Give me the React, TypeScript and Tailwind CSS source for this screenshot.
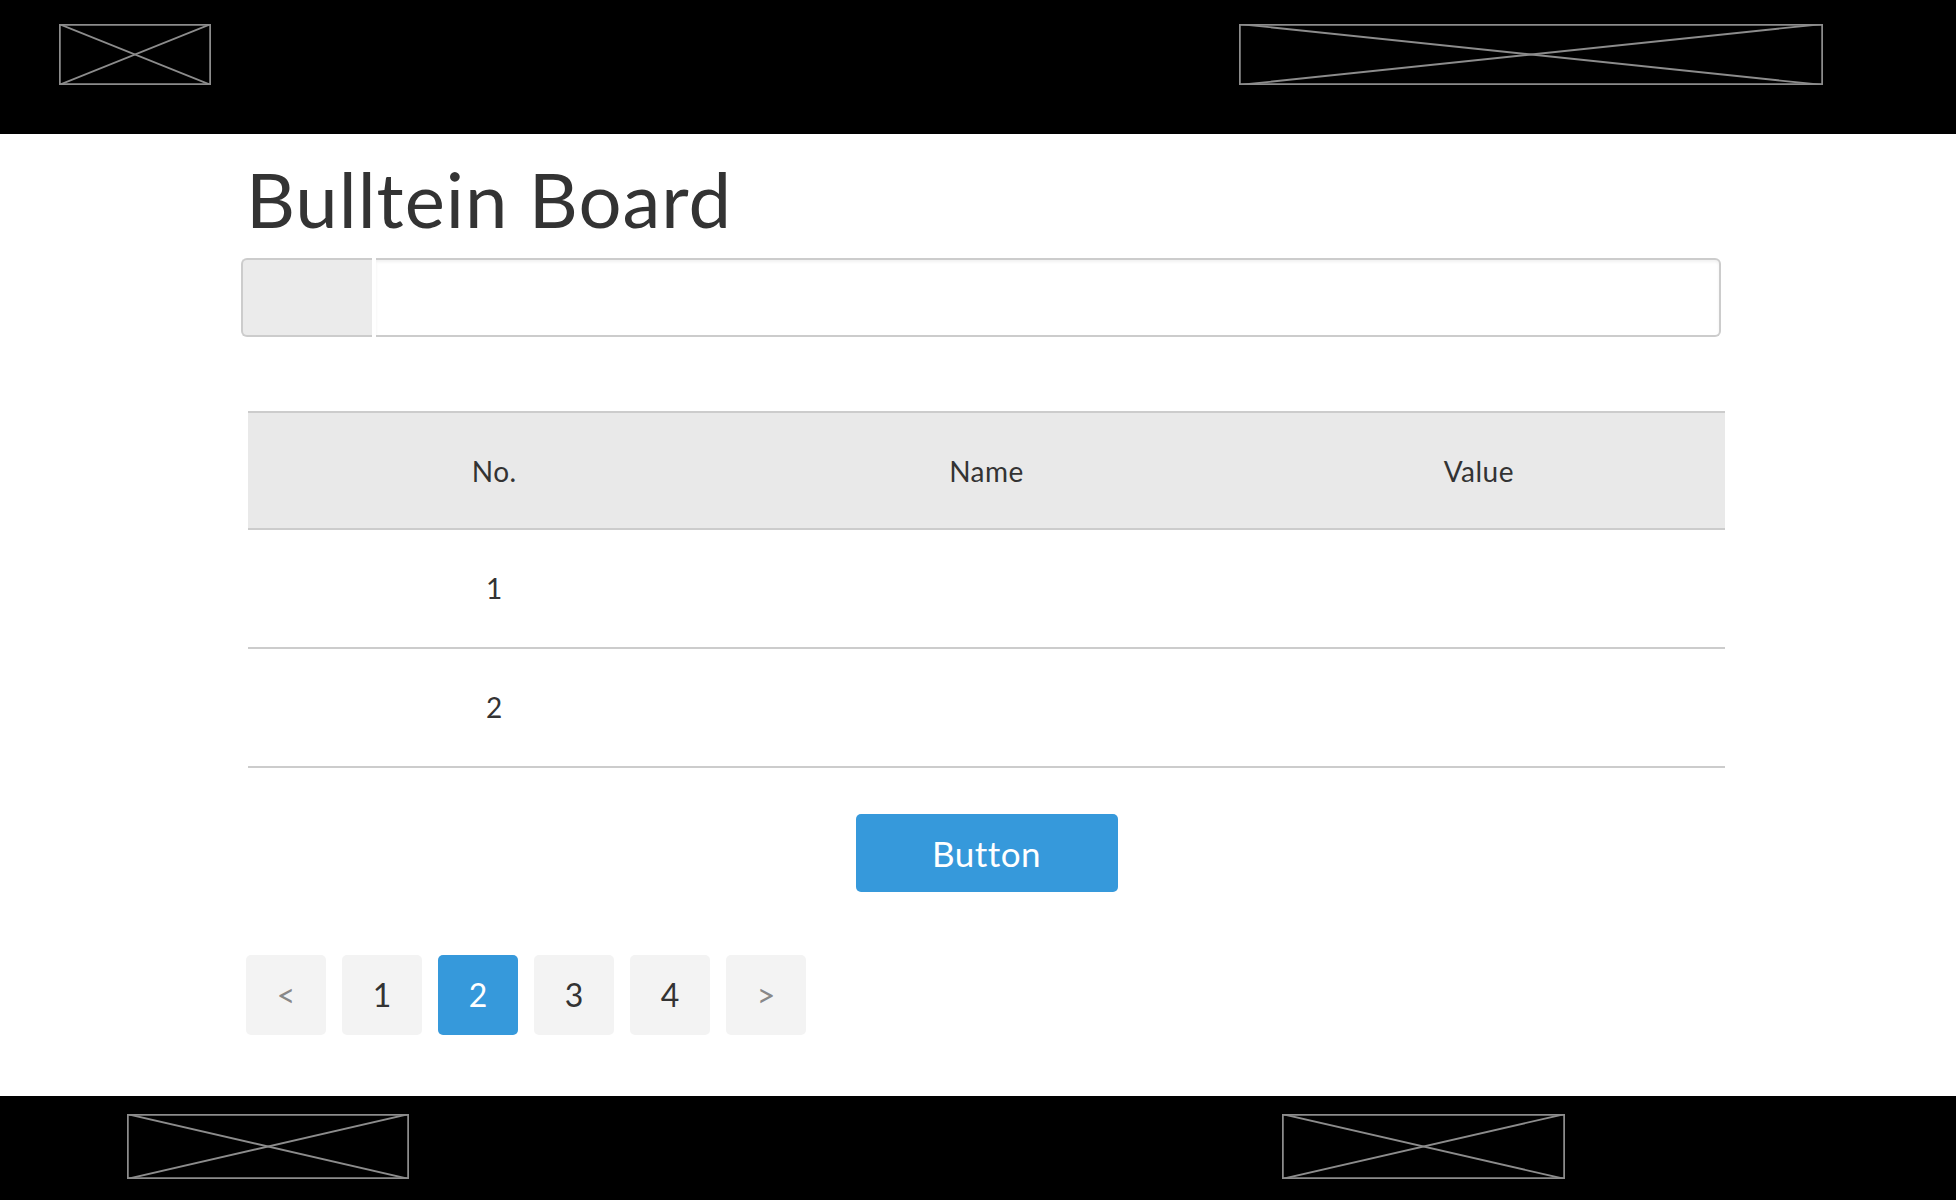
import React from 'react';

function Placeholder({ className }: { className: string }) {
  return (
    <svg className={className} viewBox="0 0 100 100" preserveAspectRatio="none">
      <rect x="0" y="0" width="100" height="100" fill="none" stroke="#8c8c8c" strokeWidth="3.5" vectorEffect="non-scaling-stroke" />
      <line x1="0" y1="0" x2="100" y2="100" stroke="#8c8c8c" strokeWidth="1.8" vectorEffect="non-scaling-stroke" />
      <line x1="100" y1="0" x2="0" y2="100" stroke="#8c8c8c" strokeWidth="1.8" vectorEffect="non-scaling-stroke" />
    </svg>
  );
}

const rows = [1, 2];
const pages = ['<', '1', '2', '3', '4', '>'];

export default function App() {
  return (
    <div className="min-h-screen flex flex-col bg-white text-[#333]" style={{ fontFamily: 'Lato, "Noto Sans", sans-serif' }}>
      {/* Header */}
      <header className="h-[134px] bg-black flex items-start justify-between pt-[24px] pl-[59px] pr-[133px] shrink-0">
        <Placeholder className="w-[152px] h-[61px]" />
        <Placeholder className="w-[584px] h-[61px]" />
      </header>

      {/* Main */}
      <main className="h-[962px] pl-[241px] flex flex-col">
        <h1 className="text-[76px] leading-none font-normal mt-[27px] ml-[5px] tracking-[1px]">Bulltein Board</h1>

        <div className="mt-[21px] w-[1480px] h-[79px] flex">
          <div className="w-[131px] bg-[#ebebeb] border-2 border-r-0 border-[#cccccc] rounded-l-[6px]" />
          <div className="w-[4px] bg-white" />
          <div className="flex-1 border-2 border-l-0 border-[#cccccc] rounded-r-[6px] shadow-[inset_0_2px_3px_rgba(0,0,0,0.06)]" />
        </div>

        <div className="mt-[74px] ml-[7px] w-[1477px]">
          <div className="border-t-2 border-b-2 border-[#cccccc] bg-[#e9e9e9] h-[119px] grid grid-cols-3 items-center text-center text-[28px] tracking-[0.5px]">
            <div>No.</div>
            <div>Name</div>
            <div>Value</div>
          </div>
          {rows.map((n) => (
            <div key={n} className="border-b-2 border-[#cccccc] h-[119px] grid grid-cols-3 items-center text-center text-[28px]">
              <div className="-mt-[2px]">{n}</div>
              <div />
              <div />
            </div>
          ))}

          <div className="mt-[46px] flex justify-center">
            <button className="w-[262px] h-[78px] bg-[#3699db] rounded-[5px] text-white text-[35px] tracking-[0.5px]">Button</button>
          </div>
        </div>

        <div className="mt-[63px] ml-[5px] flex gap-[16px]">
          {pages.map((p) => {
            const active = p === '2';
            const arrow = p === '<' || p === '>';
            return (
              <div
                key={p}
                className={
                  active
                    ? 'w-[80px] h-[80px] rounded-[5px] flex items-center justify-center text-[32px] bg-[#3699db] text-white'
                    : arrow
                      ? 'w-[80px] h-[80px] rounded-[5px] flex items-center justify-center text-[32px] bg-[#f3f3f3] text-[#888]'
                      : 'w-[80px] h-[80px] rounded-[5px] flex items-center justify-center text-[32px] bg-[#f3f3f3] text-[#333]'
                }
              >
                {p}
              </div>
            );
          })}
        </div>
      </main>

      {/* Footer */}
      <footer className="h-[104px] bg-black flex items-start pt-[18px] pl-[127px] shrink-0">
        <Placeholder className="w-[282px] h-[65px]" />
        <Placeholder className="w-[283px] h-[65px] ml-[873px]" />
      </footer>
    </div>
  );
}
